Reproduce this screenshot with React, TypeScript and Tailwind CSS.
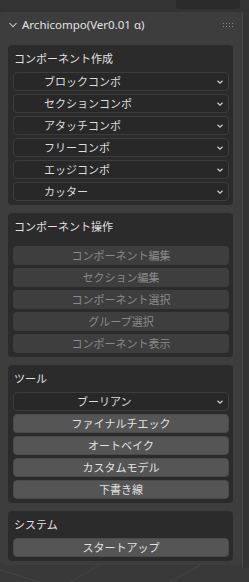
import React from "react";

const FONT = { fontFamily: '"Noto Sans", "Noto Sans CJK JP", sans-serif' };

function Chevron() {
  return (
    <svg width="8" height="6" viewBox="0 0 8 6" className="shrink-0">
      <polyline points="1.5,1.8 4,4.2 6.5,1.8" fill="none" stroke="#d0d0d0" strokeWidth="1.2" />
    </svg>
  );
}

function Dropdown({ label, indent = "pl-[30px]" }: { label: string; indent?: string }) {
  return (
    <div className={`h-[19px] rounded-[4px] bg-[#282828] border border-[#3c3c3c] flex items-center ${indent} pr-[4px] text-[11px] font-normal text-[#dedede]`}>
      <span className="flex-1 leading-none">{label}</span>
      <Chevron />
    </div>
  );
}

function Btn({ label, disabled = false }: { label: string; disabled?: boolean }) {
  return (
    <div
      className={`h-[19px] rounded-[4px] flex items-center justify-center text-[11px] font-normal leading-none ${
        disabled ? "bg-[#3e3e3e] text-[#8a8a8a]" : "bg-[#555555] text-[#e2e2e2] border border-[#4a4a4a]"
      }`}
    >
      {label}
    </div>
  );
}

function SubPanel({ title, children, gapTop }: { title: string; children: React.ReactNode; gapTop: string }) {
  return (
    <div className="ml-[8px] w-[225px] rounded-[4px] bg-[#2b2b2b] pl-[5px] pr-[4px] pb-[4px]">
      <div className={`h-[27px] flex items-center pl-[1px] text-[11px] text-[#e2e2e2] leading-none ${gapTop}`}>{title}</div>
      <div className="flex flex-col gap-[3px]">{children}</div>
    </div>
  );
}

export default function App() {
  return (
    <div className="w-[249px] h-[582px] bg-[#393939] relative overflow-hidden" style={FONT}>
      {/* top strip */}
      <div className="h-[12px] bg-[#333333] relative">
        <div className="absolute left-[176px] top-0 w-[64px] h-[9px] bg-[#2a2a2a] rounded-b-[4px]" />
      </div>
      {/* right strip */}
      <div className="absolute right-0 top-[12px] w-[7px] h-[556px] bg-[#343434] border-l border-[#474747]" />
      {/* bottom grid lines */}
      <svg className="absolute left-0 top-[565px]" width="249" height="17">
        <line x1="0" y1="5" x2="40" y2="17" stroke="#444" strokeWidth="1" />
        <line x1="70" y1="17" x2="100" y2="0" stroke="#444" strokeWidth="1" />
        <line x1="170" y1="17" x2="200" y2="0" stroke="#444" strokeWidth="1" />
      </svg>

      {/* outer panel */}
      <div className="w-[242px] h-[553px] bg-[#3d3d3d] rounded-[5px]">
        {/* header */}
        <div className="h-[25px] flex items-center pl-[9px] pr-[9px] text-[11.5px] text-[#e2e2e2]">
          <svg width="8" height="6" viewBox="0 0 8 6" className="mr-[5px]">
            <polyline points="0.5,1 4,4.8 7.5,1" fill="none" stroke="#cfcfcf" strokeWidth="1.1" />
          </svg>
          <span className="flex-1 leading-none">Archicompo(Ver0.01 α)</span>
          <div className="grid grid-cols-4 gap-x-[2px] gap-y-[2px]">
            {Array.from({ length: 8 }).map((_, i) => (
              <div key={i} className="w-[1px] h-[1px] bg-[#8a8a8a]" />
            ))}
          </div>
        </div>
        <div className="h-[8px]" />

        <div className="flex flex-col gap-[8px]">
          <SubPanel title="コンポーネント作成" gapTop="">
            <Dropdown label="ブロックコンポ" />
            <Dropdown label="セクションコンポ" />
            <Dropdown label="アタッチコンポ" />
            <Dropdown label="フリーコンポ" />
            <Dropdown label="エッジコンポ" />
            <Dropdown label="カッター" />
          </SubPanel>

          <SubPanel title="コンポーネント操作" gapTop="mb-[6px]">
            <Btn label="コンポーネント編集" disabled />
            <Btn label="セクション編集" disabled />
            <Btn label="コンポーネント選択" disabled />
            <Btn label="グループ選択" disabled />
            <Btn label="コンポーネント表示" disabled />
          </SubPanel>

          <SubPanel title="ツール" gapTop="">
            <Dropdown label="ブーリアン" indent="pl-[63px]" />
            <Btn label="ファイナルチエック" />
            <Btn label="オートベイク" />
            <Btn label="カスタムモデル" />
            <Btn label="下書き線" />
          </SubPanel>

          <SubPanel title="システム" gapTop="">
            <Btn label="スタートアップ" />
          </SubPanel>
        </div>
      </div>
    </div>
  );
}
